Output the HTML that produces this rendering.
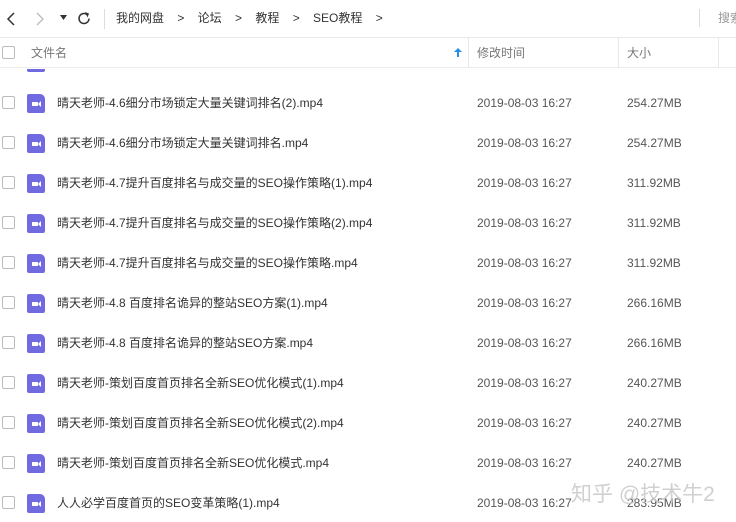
<!DOCTYPE html>
<html><head><meta charset="utf-8"><style>
*{margin:0;padding:0;box-sizing:border-box}
body{width:736px;height:522px;overflow:hidden;background:#fff;font-family:"Liberation Sans","Noto Sans CJK SC",sans-serif;color:#333;position:relative;font-size:12px}
.abs{position:absolute;white-space:nowrap}
.top{position:absolute;left:0;top:0;width:736px;height:38px;border-bottom:1px solid #e8e8e8}
.hdr{position:absolute;left:0;top:38px;width:736px;height:30px;border-bottom:1px solid #ececec;color:#777;background:#fff;z-index:2}
.cb{position:absolute;left:2px;width:13px;height:13px;border:1px solid #bbb;border-radius:2px;background:#fff}
.row{position:absolute;left:0;width:736px;height:40px;line-height:40px}
.ic{position:absolute;left:27px;top:11px;width:18px;height:19px;background:#7169e0;border-radius:2px 5px 2px 2px}
.ic:after{content:"";position:absolute;left:5px;top:8px;width:6px;height:4px;background:#fff}
.ic:before{content:"";position:absolute;left:11px;top:7px;border:3px solid transparent;border-right:3px solid #fff;border-left:0}
.nm{position:absolute;left:57px;top:0;color:#333;white-space:nowrap}
.dt{position:absolute;left:477px;top:0;color:#555}
.sz{position:absolute;left:627px;top:0;color:#555}
.vl{position:absolute;top:38px;width:1px;height:30px;background:#e8e8e8;z-index:3}
</style></head><body>
<div class="top">
<svg class="abs" style="left:5px;top:11px" width="12" height="16"><path d="M9 2 L3 8 L9 14" stroke="#333" stroke-width="1.5" fill="none"/></svg>
<svg class="abs" style="left:34px;top:11px" width="12" height="16"><path d="M3 2 L9 8 L3 14" stroke="#bbb" stroke-width="1.3" fill="none"/></svg>
<svg class="abs" style="left:60px;top:15px" width="8" height="6"><path d="M0 0 L7 0 L3.5 5Z" fill="#333"/></svg>
<svg class="abs" style="left:77px;top:11px" width="15" height="15"><path d="M12 7.5 A5 5 0 1 1 10 3.5" stroke="#333" stroke-width="1.5" fill="none"/><path d="M8 1 L12 2.5 L10.5 6.5Z" fill="#333"/></svg>
<div class="abs" style="left:104px;top:9px;width:1px;height:20px;background:#ddd"></div>
<div class="abs" style="left:116px;top:0;line-height:37px;color:#333;white-space:pre">我的网盘    &gt;    论坛    &gt;    教程    &gt;    SEO教程    &gt;</div>
<div class="abs" style="left:699px;top:9px;width:1px;height:18px;background:#ddd"></div>
<div class="abs" style="left:718px;top:0;line-height:37px;color:#999">搜索</div>
</div>
<div class="hdr">
<div class="cb" style="top:8px"></div>
<div class="abs" style="left:31px;top:0;line-height:30px">文件名</div>
<svg class="abs" style="left:454px;top:10px" width="8" height="10"><path d="M4 0 L8 4 L5 4 L5 9 L3 9 L3 4 L0 4Z" fill="#2a8ee8"/></svg>
<div class="abs" style="left:477px;top:0;line-height:30px">修改时间</div>
<div class="abs" style="left:627px;top:0;line-height:30px">大小</div>
</div>
<div class="vl" style="left:468px"></div><div class="vl" style="left:618px"></div><div class="vl" style="left:718px"></div>
<div style="position:absolute;left:0;top:69px;width:736px;height:453px;overflow:hidden">
<div class="row" style="top:-27px"><div class="cb" style="top:13px"></div><div class="ic"></div></div>
<div class="row" style="top:14px"><div class="cb" style="top:13px"></div><div class="ic"></div><div class="nm">晴天老师-4.6细分市场锁定大量关键词排名(2).mp4</div><div class="dt">2019-08-03 16:27</div><div class="sz">254.27MB</div></div>
<div class="row" style="top:54px"><div class="cb" style="top:13px"></div><div class="ic"></div><div class="nm">晴天老师-4.6细分市场锁定大量关键词排名.mp4</div><div class="dt">2019-08-03 16:27</div><div class="sz">254.27MB</div></div>
<div class="row" style="top:94px"><div class="cb" style="top:13px"></div><div class="ic"></div><div class="nm">晴天老师-4.7提升百度排名与成交量的SEO操作策略(1).mp4</div><div class="dt">2019-08-03 16:27</div><div class="sz">311.92MB</div></div>
<div class="row" style="top:134px"><div class="cb" style="top:13px"></div><div class="ic"></div><div class="nm">晴天老师-4.7提升百度排名与成交量的SEO操作策略(2).mp4</div><div class="dt">2019-08-03 16:27</div><div class="sz">311.92MB</div></div>
<div class="row" style="top:174px"><div class="cb" style="top:13px"></div><div class="ic"></div><div class="nm">晴天老师-4.7提升百度排名与成交量的SEO操作策略.mp4</div><div class="dt">2019-08-03 16:27</div><div class="sz">311.92MB</div></div>
<div class="row" style="top:214px"><div class="cb" style="top:13px"></div><div class="ic"></div><div class="nm">晴天老师-4.8 百度排名诡异的整站SEO方案(1).mp4</div><div class="dt">2019-08-03 16:27</div><div class="sz">266.16MB</div></div>
<div class="row" style="top:254px"><div class="cb" style="top:13px"></div><div class="ic"></div><div class="nm">晴天老师-4.8 百度排名诡异的整站SEO方案.mp4</div><div class="dt">2019-08-03 16:27</div><div class="sz">266.16MB</div></div>
<div class="row" style="top:294px"><div class="cb" style="top:13px"></div><div class="ic"></div><div class="nm">晴天老师-策划百度首页排名全新SEO优化模式(1).mp4</div><div class="dt">2019-08-03 16:27</div><div class="sz">240.27MB</div></div>
<div class="row" style="top:334px"><div class="cb" style="top:13px"></div><div class="ic"></div><div class="nm">晴天老师-策划百度首页排名全新SEO优化模式(2).mp4</div><div class="dt">2019-08-03 16:27</div><div class="sz">240.27MB</div></div>
<div class="row" style="top:374px"><div class="cb" style="top:13px"></div><div class="ic"></div><div class="nm">晴天老师-策划百度首页排名全新SEO优化模式.mp4</div><div class="dt">2019-08-03 16:27</div><div class="sz">240.27MB</div></div>
<div class="row" style="top:414px"><div class="cb" style="top:13px"></div><div class="ic"></div><div class="nm">人人必学百度首页的SEO变革策略(1).mp4</div><div class="dt">2019-08-03 16:27</div><div class="sz">283.95MB</div></div>
</div>
<div class="abs" style="left:571px;top:478px;font-size:21px;color:rgba(200,200,200,0.85)">知乎 @技术牛2</div>
</body></html>
